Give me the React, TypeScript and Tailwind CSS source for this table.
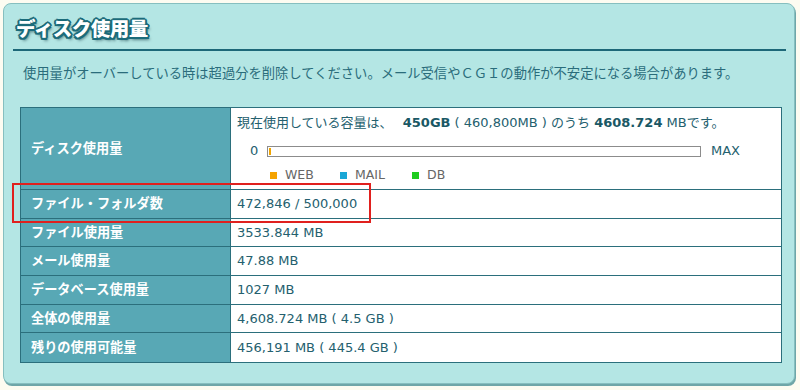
import React from "react";

const font = "font-['DejaVu_Sans','Noto_Sans_CJK_JP',sans-serif]";

const rows: { label: string; value: string; h: string }[] = [
  { label: "ファイル・フォルダ数", value: "472,846 / 500,000", h: "h-[29px]" },
  { label: "ファイル使用量", value: "3533.844 MB", h: "h-[28px]" },
  { label: "メール使用量", value: "47.88 MB", h: "h-[29px]" },
  { label: "データベース使用量", value: "1027 MB", h: "h-[29px]" },
  { label: "全体の使用量", value: "4,608.724 MB ( 4.5 GB )", h: "h-[28px]" },
  { label: "残りの使用可能量", value: "456,191 MB ( 445.4 GB )", h: "h-[29px]" },
];

export default function App() {
  return (
    <div className={`relative h-[390px] w-[800px] bg-[#fdfcf1] pl-[3px] pr-[5px] pt-[3px] ${font}`}>
      <div className="h-[381px] rounded-[8px] border border-[#86bfbf] bg-[#b4e6e4] pl-[9px] pr-[8px] shadow-[1px_2px_0_#6fa6a8]">
        <div className="flex h-[45px] items-center pl-[3px] pt-[2px]">
          <span className="font-['Noto_Sans_CJK_JP',sans-serif] text-[19.5px] font-black leading-none tracking-[-0.5px] text-white [text-shadow:-1.5px_-1.5px_0_#1b6b7a,1.5px_-1.5px_0_#1b6b7a,-1.5px_1.5px_0_#1b6b7a,1.5px_1.5px_0_#1b6b7a,0_2px_0_#1b6b7a,2px_0_0_#1b6b7a,-2px_0_0_#1b6b7a,0_-2px_0_#1b6b7a,2px_3px_3px_rgba(0,40,50,0.55)]">
            ディスク使用量
          </span>
        </div>
        <div className="h-[2px] bg-[#1d6878]" />
        <p className="mb-[24px] mt-[14px] pl-[10px] text-[13.3px] leading-[18px] text-[#2a6c7b]">
          使用量がオーバーしている時は超過分を削除してください。メール受信やＣＧＩの動作が不安定になる場合があります。
        </p>
        <div className="ml-[7px] w-[762px] border border-[#2b6f7c] bg-white text-[13px]">
          <div className="flex h-[82px] border-b border-[#2b6f7c]">
            <div className="flex w-[210px] shrink-0 items-center border-r border-[#2b6f7c] bg-[#58a8b5] pl-[10px] text-[13.2px] font-bold text-white">
              ディスク使用量
            </div>
            <div className="flex-1 pl-[6px] text-[#24606e]">
              <div className="mt-[6px] h-[18px] leading-[18px]">
                現在使用している容量は、 <b className="ml-[6px] text-[#1a5865]">450GB</b> ( 460,800MB ) のうち{" "}
                <b className="text-[#1a5865]">4608.724</b> MBです。
              </div>
              <div className="mt-[11px] flex h-[16px] items-center">
                <span className="ml-[13px] w-[17px]">0</span>
                <div className="relative h-[11px] w-[434px] border border-[#8c8c8c] bg-white">
                  <div className="absolute left-[1px] top-[1px] h-[7px] w-[2px] bg-[#f0a400]" />
                </div>
                <span className="ml-[10px]">MAX</span>
              </div>
              <div className="mt-[8px] flex h-[16px] items-center text-[12.5px] text-[#666666]">
                <span className="ml-[33px] mr-[8px] h-[7px] w-[7px] bg-[#f5a300]" />
                <span className="w-[55px]">WEB</span>
                <span className="mr-[8px] h-[7px] w-[7px] bg-[#1aa7d6]" />
                <span className="w-[57px]">MAIL</span>
                <span className="mr-[8px] h-[7px] w-[7px] bg-[#1fcc1f]" />
                <span>DB</span>
              </div>
            </div>
          </div>
          {rows.map((r, i) => (
            <div
              key={r.label}
              className={`flex ${r.h} ${i < rows.length - 1 ? "border-b border-[#2b6f7c]" : ""}`}
            >
              <div className="flex w-[210px] shrink-0 items-center border-r border-[#2b6f7c] bg-[#58a8b5] pl-[10px] text-[13.2px] font-bold text-white">
                {r.label}
              </div>
              <div className="flex flex-1 items-center pl-[6px] text-[#24606e]">{r.value}</div>
            </div>
          ))}
        </div>
      </div>
      <div className="absolute left-[12px] top-[183px] h-[40px] w-[359px] border-2 border-[#e0201e]" />
    </div>
  );
}
